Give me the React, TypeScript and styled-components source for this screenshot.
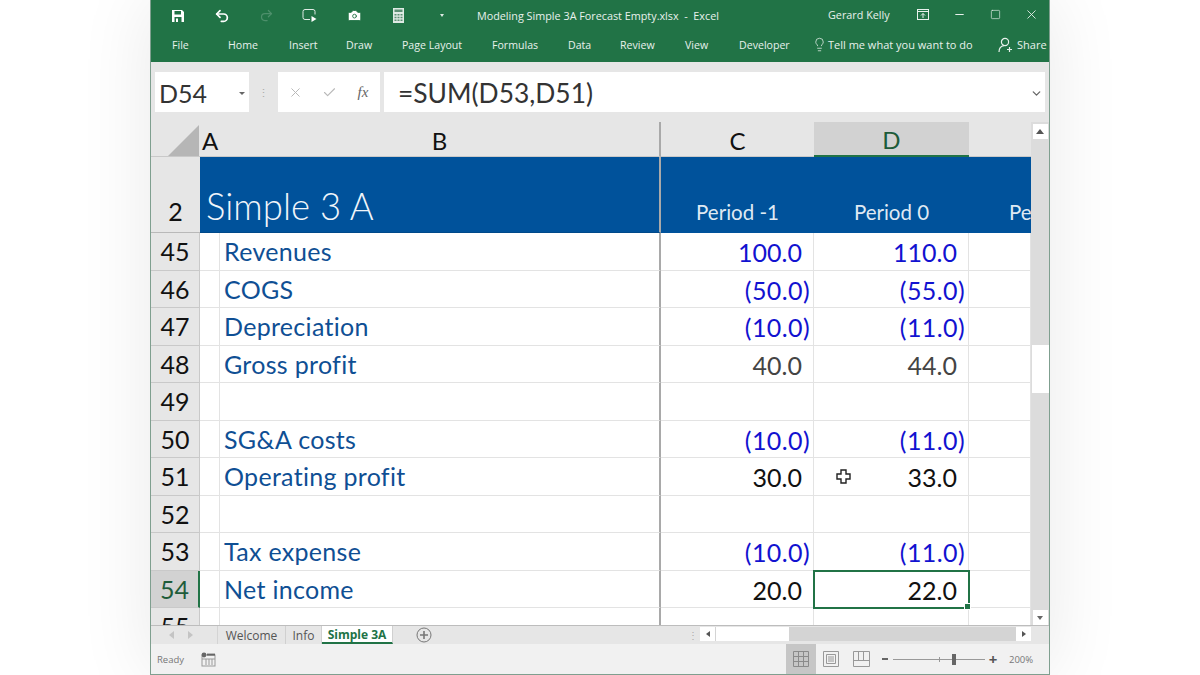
import React from "react"
import styled, { createGlobalStyle } from "styled-components"
import { Camera, Lightbulb, Redo2, Undo2, X, Check, ChevronDown, Minus, Square } from "lucide-react"

const GREEN = "#217346"
const UI_FONT = '"Open Sans", "Liberation Sans", sans-serif'
const CELL_FONT = 'Lato, "Liberation Sans", sans-serif'

const GlobalStyle = createGlobalStyle`
    html, body {
        margin: 0;
        padding: 0;
        background: #fff;
        overflow: hidden;
    }
`

const Page = styled.div`
    width: 1200px;
    height: 675px;
    display: flex;
    justify-content: center;
    overflow: hidden;
`

const ExcelWindow = styled.div`
    width: 900px;
    height: 675px;
    box-sizing: border-box;
    border-left: 1px solid #7f9f8f;
    border-right: 1px solid #7f9f8f;
    border-bottom: 1px solid #7f9f8f;
    display: flex;
    flex-direction: column;
    box-shadow: 0 0 70px rgba(0, 0, 0, 0.09);
    background: #e6e6e6;
    font-family: ${UI_FONT};
    position: relative;
`

const Ribbon = styled.div`
    height: 62px;
    background: ${GREEN};
    color: #e8f1ec;
    display: flex;
    flex-direction: column;
    flex-shrink: 0;
`

const TitleRow = styled.div`
    height: 31px;
    display: flex;
    align-items: center;
    padding-left: 5px;
    font-size: 10.8px;
`

const QuickButton = styled.div`
    width: 44px;
    height: 31px;
    display: flex;
    align-items: center;
    justify-content: center;
    flex-shrink: 0;
`

const QuickCaret = styled.span`
    width: 0;
    height: 0;
    border-left: 2px solid transparent;
    border-right: 2px solid transparent;
    border-top: 3px solid #dfeae4;
`

const FileName = styled.div`
    margin-left: 13px;
    width: 351px;
    flex-shrink: 0;
    white-space: pre;
`

const UserName = styled.div`
    width: 77px;
    flex-shrink: 0;
    margin-top: -3px;
    white-space: nowrap;
`

const WindowButton = styled.div`
    width: 36px;
    height: 30px;
    margin-top: -3px;
    display: flex;
    align-items: center;
    justify-content: center;
    flex-shrink: 0;
`

const TabRow = styled.div`
    height: 31px;
    box-sizing: border-box;
    padding: 0 0 4px 21px;
    display: flex;
    align-items: center;
    font-size: 10.6px;
`

const RibbonTab = styled.div<{ $width: number }>`
    width: ${props => props.$width}px;
    flex-shrink: 0;
    white-space: nowrap;
`

const TellMe = styled.div`
    width: 186px;
    flex-shrink: 0;
    display: flex;
    align-items: center;
    gap: 1px;
    margin-left: -2px;
    font-size: 11px;
    white-space: nowrap;
`

const ShareBox = styled.div`
    display: flex;
    align-items: center;
    gap: 3px;
    font-size: 11px;
`

const FormulaBar = styled.div`
    height: 60px;
    flex-shrink: 0;
    box-sizing: border-box;
    padding: 10px 4px 10px 4px;
    display: flex;
    align-items: stretch;
    background: #e6e6e6;
`

const NameBox = styled.div`
    width: 94px;
    background: #fff;
    display: flex;
    align-items: center;
    justify-content: space-between;
    box-sizing: border-box;
    padding: 2px 4px 0 4px;
    font-family: ${CELL_FONT};
    font-size: 25px;
    color: #333;
`

const Caret = styled.span`
    width: 0;
    height: 0;
    border-left: 3px solid transparent;
    border-right: 3px solid transparent;
    border-top: 3px solid #666;
`

const Grip = styled.div`
    width: 29px;
    display: flex;
    align-items: center;
    justify-content: center;
    color: #aaa;
    font-size: 11px;
`

const FxBox = styled.div`
    width: 102px;
    background: #fff;
    display: grid;
    grid-template-columns: repeat(3, 34px);
    align-items: center;
    justify-items: center;
    color: #b9b9b9;
`

const FxMark = styled.span`
    font-family: "Liberation Serif", serif;
    font-style: italic;
    font-size: 15px;
    color: #666;
`

const FormulaInput = styled.div`
    flex: 1;
    margin-left: 4px;
    background: #fff;
    display: flex;
    align-items: center;
    justify-content: space-between;
    padding: 2px 2px 0 14px;
    font-family: ${CELL_FONT};
    font-size: 26.4px;
    color: #333;
`

const SheetArea = styled.div`
    height: 503px;
    flex-shrink: 0;
    display: flex;
`

const Sheet = styled.div`
    width: 880px;
    flex-shrink: 0;
    overflow: hidden;
    background: #fff;
    font-family: ${CELL_FONT};
    position: relative;
`

const gridColumns = "49px 20px 441px 153px 155px 62px"

const HeaderRow = styled.div`
    height: 35px;
    display: grid;
    grid-template-columns: ${gridColumns};
    background: #e6e6e6;
    font-size: 24px;
    color: #111;
`

const ColumnHead = styled.div<{ $selected?: boolean; $frozen?: boolean }>`
    box-sizing: border-box;
    display: flex;
    align-items: center;
    justify-content: center;
    padding-top: 2px;
    background: ${props => (props.$selected ? "#d2d2d2" : "#e6e6e6")};
    color: ${props => (props.$selected ? "#1e5c3a" : "#111")};
    border-bottom: ${props => (props.$selected ? `2px solid ${GREEN}` : "1px solid #c9c9c9")};
    border-right: ${props => (props.$frozen ? "2px solid #a9a9a9" : "none")};
`

const CornerHead = styled.div`
    box-sizing: border-box;
    display: flex;
    align-items: flex-end;
    justify-content: flex-end;
    border-bottom: 1px solid #c9c9c9;
`

const BannerRow = styled.div`
    height: 76px;
    display: grid;
    grid-template-columns: ${gridColumns};
`

const BannerHead = styled.div`
    background: #e6e6e6;
    border-bottom: 1px solid #b9b9b9;
    box-sizing: border-box;
    display: flex;
    align-items: flex-end;
    justify-content: center;
    padding-bottom: 6px;
    font-size: 25px;
    color: #111;
`

const BannerTitle = styled.div`
    grid-column: span 2;
    background: #00529b;
    color: #f0f5fa;
    box-sizing: border-box;
    display: flex;
    align-items: flex-end;
    padding: 0 0 3px 6px;
    font-size: 36.5px;
    font-weight: 300;
    line-height: 46px;
    border-right: 2px solid #a9a9a9;
    border-bottom: 1px solid #00498a;
`

const BannerPeriod = styled.div`
    background: #00529b;
    color: #dfe9f3;
    display: flex;
    align-items: flex-end;
    justify-content: center;
    padding-bottom: 9px;
    font-size: 20.5px;
    overflow: hidden;
    white-space: nowrap;
`

const BannerEdge = styled(BannerPeriod)`
    justify-content: flex-start;
    padding-left: 40px;
`

const Row = styled.div`
    height: 37.5px;
    display: grid;
    grid-template-columns: ${gridColumns};
`

const RowHead = styled.div<{ $selected?: boolean }>`
    box-sizing: border-box;
    background: ${props => (props.$selected ? "#d2d2d2" : "#e6e6e6")};
    color: ${props => (props.$selected ? "#1e5c3a" : "#111")};
    border-bottom: 1px solid #c9c9c9;
    border-right: ${props => (props.$selected ? `2px solid ${GREEN}` : "1px solid #c9c9c9")};
    display: flex;
    align-items: center;
    justify-content: center;
    font-size: 25px;
`

const Cell = styled.div<{ $frozen?: boolean; $color?: string; $active?: boolean; $negative?: boolean }>`
    box-sizing: border-box;
    border-bottom: 1px solid #e3e3e3;
    border-right: ${props => (props.$frozen ? "2px solid #a9a9a9" : "1px solid #e3e3e3")};
    color: ${props => props.$color || "#111"};
    display: flex;
    align-items: center;
    justify-content: flex-end;
    padding: 2px ${props => (props.$negative ? 3 : 11)}px 0 0;
    font-size: 25px;
    letter-spacing: ${props => (props.$negative ? 0.4 : 0)}px;
    white-space: nowrap;
    position: relative;
    ${props => props.$active && `
        outline: 2px solid ${GREEN};
        outline-offset: -1px;
        z-index: 1;
    `}
`

const LabelCell = styled(Cell)`
    justify-content: flex-start;
    padding: 0 0 0 4px;
    color: #0f4f94;
    letter-spacing: 0.3px;
`

const FillHandle = styled.span`
    position: absolute;
    right: -3px;
    bottom: -3px;
    width: 5px;
    height: 5px;
    background: ${GREEN};
    border: 1px solid #fff;
`

const CursorMark = styled.svg`
    position: absolute;
    left: 685px;
    top: 347px;
    z-index: 2;
`

const VerticalScroll = styled.div`
    width: 19px;
    background: #dcdcdc;
    display: flex;
    flex-direction: column;
    align-items: center;
    box-sizing: border-box;
    padding-top: 2px;
`

const ScrollButton = styled.div<{ $mt?: number }>`
    width: 15px;
    height: 15px;
    flex-shrink: 0;
    background: #fff;
    margin-top: ${props => props.$mt || 0}px;
    display: flex;
    align-items: center;
    justify-content: center;
`

const VerticalThumb = styled.div`
    width: 17px;
    height: 48px;
    flex-shrink: 0;
    background: #fff;
    margin-top: 206px;
`

const ArrowUp = styled.span`
    border-left: 4px solid transparent;
    border-right: 4px solid transparent;
    border-bottom: 5px solid #555;
`

const ArrowDown = styled.span`
    border-left: 3px solid transparent;
    border-right: 3px solid transparent;
    border-top: 4px solid #666;
`

const ArrowLeft = styled.span`
    border-top: 3px solid transparent;
    border-bottom: 3px solid transparent;
    border-right: 4px solid #555;
`

const ArrowRight = styled.span`
    border-top: 3px solid transparent;
    border-bottom: 3px solid transparent;
    border-left: 4px solid #555;
`

const SheetTabsBar = styled.div`
    height: 19px;
    flex-shrink: 0;
    box-sizing: border-box;
    border-top: 1px solid #bdbdbd;
    display: flex;
    align-items: stretch;
    background: #e6e6e6;
    font-size: 12px;
    color: #555;
`

const TabNav = styled.div`
    width: 67px;
    flex-shrink: 0;
    display: flex;
    align-items: center;
    justify-content: center;
    gap: 14px;
    padding-right: 6px;
    box-sizing: border-box;
    border-right: 1px solid #d4d4d4;
`

const SheetTab = styled.div<{ $active?: boolean; $width: number }>`
    width: ${props => props.$width}px;
    flex-shrink: 0;
    box-sizing: border-box;
    display: flex;
    align-items: center;
    justify-content: center;
    background: ${props => (props.$active ? "#fff" : "#e6e6e6")};
    color: ${props => (props.$active ? "#217346" : "#555")};
    font-weight: ${props => (props.$active ? 700 : 400)};
    border-right: 1px solid #d0d0d0;
    border-bottom: ${props => (props.$active ? `2px solid ${GREEN}` : "none")};
`

const AddSheet = styled.div`
    width: 295px;
    flex-shrink: 0;
    display: flex;
    align-items: center;
    padding-left: 23px;
    box-sizing: border-box;
`

const TabGrip = styled.div`
    width: 12px;
    flex-shrink: 0;
    color: #aaa;
    display: flex;
    align-items: center;
    justify-content: flex-start;
    font-size: 10px;
`

const HorizontalScroll = styled.div`
    width: 331px;
    flex-shrink: 0;
    display: flex;
    align-items: center;
    background: #d4d4d4;
    margin: 1px 0 3px 0;
`

const HScrollButton = styled.div`
    width: 15px;
    height: 100%;
    background: #fff;
    flex-shrink: 0;
    display: flex;
    align-items: center;
    justify-content: center;
`

const HorizontalThumb = styled.div`
    width: 73px;
    height: 100%;
    background: #fff;
    margin-left: 1px;
`

const HorizontalGap = styled.div`
    flex: 1;
`

const StatusBar = styled.div`
    flex: 1;
    background: #f1f1f1;
    display: flex;
    align-items: center;
    font-size: 9.5px;
    color: #777;
    padding-left: 6px;
`

const ReadyLabel = styled.div`
    width: 44px;
    flex-shrink: 0;
`

const StatusSpacer = styled.div`
    width: 570px;
    flex-shrink: 0;
`

const ViewButton = styled.div<{ $active?: boolean }>`
    width: 30px;
    height: 30px;
    flex-shrink: 0;
    display: flex;
    align-items: center;
    justify-content: center;
    background: ${props => (props.$active ? "#c6c6c6" : "transparent")};
`

const ZoomMinus = styled.div`
    width: 6px;
    margin-left: 6px;
    height: 2px;
    background: #666;
    flex-shrink: 0;
`

const ZoomTrack = styled.div`
    width: 92px;
    height: 1px;
    margin: 0 1px 0 5px;
    background: #999;
    position: relative;
    flex-shrink: 0;
`

const ZoomTick = styled.span`
    position: absolute;
    left: 46px;
    top: -2px;
    width: 1px;
    height: 5px;
    background: #999;
`

const ZoomThumb = styled.span`
    position: absolute;
    left: 59px;
    top: -5px;
    width: 4px;
    height: 11px;
    background: #666;
`

const ZoomPlus = styled.div`
    color: #555;
    font-size: 15px;
    font-weight: 700;
    width: 14px;
    text-align: center;
    flex-shrink: 0;
`

const ZoomValue = styled.div`
    margin-left: 9px;
    flex-shrink: 0;
`

type RowData = {
    num: number,
    label?: string,
    c?: string,
    d?: string,
    tone?: "input" | "calc" | "total"
}

const rows: RowData[] = [
    { num: 45, label: "Revenues", c: "100.0", d: "110.0", tone: "input" },
    { num: 46, label: "COGS", c: "(50.0)", d: "(55.0)", tone: "input" },
    { num: 47, label: "Depreciation", c: "(10.0)", d: "(11.0)", tone: "input" },
    { num: 48, label: "Gross profit", c: "40.0", d: "44.0", tone: "calc" },
    { num: 49 },
    { num: 50, label: "SG&A costs", c: "(10.0)", d: "(11.0)", tone: "input" },
    { num: 51, label: "Operating profit", c: "30.0", d: "33.0", tone: "total" },
    { num: 52 },
    { num: 53, label: "Tax expense", c: "(10.0)", d: "(11.0)", tone: "input" },
    { num: 54, label: "Net income", c: "20.0", d: "22.0", tone: "total" },
    { num: 55 },
]

const toneColors = { input: "#1212d0", calc: "#444", total: "#111" }

const tabs: [string, number][] = [
    ["File", 56], ["Home", 61], ["Insert", 57], ["Draw", 56], ["Page Layout", 90],
    ["Formulas", 76], ["Data", 52], ["Review", 65], ["View", 54], ["Developer", 75],
]

function SaveIcon() {
    return (
        <svg width="14" height="14" viewBox="0 0 14 14" fill="none">
            <path d="M1 1h10l2 2v10H1z" fill="#fff" />
            <rect x="3.5" y="2" width="6.5" height="3.5" fill={GREEN} />
            <rect x="3.5" y="8" width="7" height="5" fill={GREEN} />
            <rect x="5" y="9.5" width="2" height="3.5" fill="#fff" />
        </svg>
    )
}

function SlideIcon() {
    return (
        <svg width="16" height="14" viewBox="0 0 16 14" fill="none" stroke="#dfeae4" strokeWidth="1">
            <path d="M8 10.5H3a2 2 0 0 1-2-2v-6a2 2 0 0 1 2-2h8a2 2 0 0 1 2 2v3" />
            <path d="M9.5 7v6l5-3z" fill="#fff" stroke="none" />
        </svg>
    )
}

function CalculatorIcon() {
    return (
        <svg width="11" height="15" viewBox="0 0 11 15">
            <rect x="0" y="0" width="11" height="15" fill="#dfeae4" />
            <rect x="1.5" y="1.5" width="8" height="2.5" fill="#5c8f74" />
            <path d="M1.5 6h2v1.5h-2zM4.5 6h2v1.5h-2zM7.5 6h2v1.5h-2zM1.5 8.7h2v1.5h-2zM4.5 8.7h2v1.5h-2zM7.5 8.7h2v1.5h-2zM1.5 11.4h2v1.5h-2zM4.5 11.4h2v1.5h-2zM7.5 11.4h2v1.5h-2z" fill="#5c8f74" />
        </svg>
    )
}

function RestoreRibbonIcon() {
    return (
        <svg width="12" height="11" viewBox="0 0 12 11" fill="none" stroke="#e8f1ec" strokeWidth="1">
            <rect x="0.5" y="0.5" width="11" height="10" />
            <path d="M0.5 2.5h11" />
            <path d="M6 9V4.5M4 6.5l2-2 2 2" />
        </svg>
    )
}

function ShareIcon() {
    return (
        <svg width="16" height="16" viewBox="0 0 16 16" fill="none" stroke="#e8f1ec" strokeWidth="1.2">
            <circle cx="7" cy="5" r="3.6" />
            <path d="M1 15c0-3.6 2.2-6 5-6.4M11.5 10v5M9 12.5h5" />
        </svg>
    )
}

function CursorIcon() {
    return (
        <CursorMark width="15" height="15" viewBox="0 0 15 15">
            <path d="M5 1h5v4h4v5h-4v4H5v-4H1V5h4z" fill="#fff" stroke="#222" strokeWidth="1.4" />
        </CursorMark>
    )
}

function PlusCircle() {
    return (
        <svg width="16" height="16" viewBox="0 0 16 16" fill="none" stroke="#777" strokeWidth="1">
            <circle cx="8" cy="8" r="7" />
            <path d="M8 4v8M4 8h8" strokeWidth="1.6" />
        </svg>
    )
}

function MacroIcon() {
    return (
        <svg width="15" height="15" viewBox="0 0 15 15" fill="none" stroke="#999" strokeWidth="1">
            <rect x="1" y="3" width="13" height="11" />
            <path d="M5 7v6M8 7v6M11 7v6M1 7h13" />
            <circle cx="3" cy="3" r="2.4" fill="#666" stroke="none" />
            <rect x="6" y="1.6" width="8" height="2" fill="#666" stroke="none" />
        </svg>
    )
}

function NormalViewIcon() {
    return (
        <svg width="16" height="16" viewBox="0 0 16 16" fill="none" stroke="#8a8a8a" strokeWidth="1">
            <path d="M.5.5h15v15H.5zM5.5.5v15M10.5.5v15M.5 5.5h15M.5 10.5h15" />
        </svg>
    )
}

function LayoutViewIcon() {
    return (
        <svg width="16" height="16" viewBox="0 0 16 16" fill="none" stroke="#999" strokeWidth="1">
            <path d="M.5.5h15v15H.5zM3.5 3.5h9v9h-9zM5 6h6M5 8h6M5 10h6" />
        </svg>
    )
}

function BreakViewIcon() {
    return (
        <svg width="17" height="16" viewBox="0 0 17 16" fill="none" stroke="#999" strokeWidth="1">
            <path d="M.5.5h16v15H.5zM.5 9.5h16" />
            <path d="M5.5.5v9M10.5.5v9" />
        </svg>
    )
}

function ArrowLeftSmall() {
    return <svg width="5" height="8" viewBox="0 0 5 8"><path d="M5 0v8L0 4z" fill="#c4c4c4" /></svg>
}

function ArrowRightSmall() {
    return <svg width="5" height="8" viewBox="0 0 5 8"><path d="M0 0v8l5-4z" fill="#c4c4c4" /></svg>
}

export default function App() {
    return (
        <Page>
            <GlobalStyle />
            <ExcelWindow>
                <Ribbon>
                    <TitleRow>
                        <QuickButton><SaveIcon /></QuickButton>
                        <QuickButton><Undo2 size={16} color="#fff" strokeWidth={2.6} /></QuickButton>
                        <QuickButton><Redo2 size={15} color="#4d8f6b" strokeWidth={2} /></QuickButton>
                        <QuickButton><SlideIcon /></QuickButton>
                        <QuickButton><Camera size={15} color={GREEN} fill="#fff" strokeWidth={1.4} /></QuickButton>
                        <QuickButton><CalculatorIcon /></QuickButton>
                        <QuickButton><QuickCaret /></QuickButton>
                        <FileName>Modeling Simple 3A Forecast Empty.xlsx  -  Excel</FileName>
                        <UserName>Gerard Kelly</UserName>
                        <WindowButton><RestoreRibbonIcon /></WindowButton>
                        <WindowButton><Minus size={13} color="#e8f1ec" /></WindowButton>
                        <WindowButton><Square size={11} color="#e8f1ec" strokeWidth={1.4} /></WindowButton>
                        <WindowButton><X size={15} color="#e8f1ec" strokeWidth={1.4} /></WindowButton>
                    </TitleRow>
                    <TabRow>
                        {tabs.map(([name, width]) => (
                            <RibbonTab key={name} $width={width}>{name}</RibbonTab>
                        ))}
                        <TellMe>
                            <Lightbulb size={15} strokeWidth={1.2} />
                            Tell me what you want to do
                        </TellMe>
                        <ShareBox>
                            <ShareIcon />
                            Share
                        </ShareBox>
                    </TabRow>
                </Ribbon>

                <FormulaBar>
                    <NameBox>D54<Caret /></NameBox>
                    <Grip>⋮</Grip>
                    <FxBox>
                        <X size={15} strokeWidth={1.6} />
                        <Check size={15} strokeWidth={1.8} />
                        <FxMark>fx</FxMark>
                    </FxBox>
                    <FormulaInput>
                        =SUM(D53,D51)
                        <ChevronDown size={13} color="#666" strokeWidth={2.4} />
                    </FormulaInput>
                </FormulaBar>

                <SheetArea>
                    <Sheet>
                        <HeaderRow>
                            <CornerHead>
                                <svg width="32" height="31" viewBox="0 0 32 31">
                                    <path d="M0 31L31 0v31z" fill="#b6b6b6" />
                                </svg>
                            </CornerHead>
                            <ColumnHead>A</ColumnHead>
                            <ColumnHead $frozen>B</ColumnHead>
                            <ColumnHead>C</ColumnHead>
                            <ColumnHead $selected>D</ColumnHead>
                            <ColumnHead />
                        </HeaderRow>
                        <BannerRow>
                            <BannerHead>2</BannerHead>
                            <BannerTitle>Simple 3 A</BannerTitle>
                            <BannerPeriod>Period -1</BannerPeriod>
                            <BannerPeriod>Period 0</BannerPeriod>
                            <BannerEdge>Period 1</BannerEdge>
                        </BannerRow>
                        {rows.map(row => {
                            const color = row.tone && toneColors[row.tone]
                            const active = row.num === 54
                            return (
                                <Row key={row.num}>
                                    <RowHead $selected={active}>{row.num}</RowHead>
                                    <Cell />
                                    <LabelCell $frozen>{row.label}</LabelCell>
                                    <Cell $color={color} $negative={row.c?.startsWith("(")}>{row.c}</Cell>
                                    <Cell $color={color} $active={active} $negative={row.d?.startsWith("(")}>
                                        {row.d}
                                        {active && <FillHandle />}
                                    </Cell>
                                    <Cell />
                                </Row>
                            )
                        })}
                        <CursorIcon />
                    </Sheet>
                    <VerticalScroll>
                        <ScrollButton><ArrowUp /></ScrollButton>
                        <VerticalThumb />
                        <ScrollButton $mt={217}><ArrowDown /></ScrollButton>
                    </VerticalScroll>
                </SheetArea>

                <SheetTabsBar>
                    <TabNav><ArrowLeftSmall /><ArrowRightSmall /></TabNav>
                    <SheetTab $width={68}>Welcome</SheetTab>
                    <SheetTab $width={36}>Info</SheetTab>
                    <SheetTab $width={71} $active>Simple 3A</SheetTab>
                    <AddSheet><PlusCircle /></AddSheet>
                    <TabGrip>⋮</TabGrip>
                    <HorizontalScroll>
                        <HScrollButton><ArrowLeft /></HScrollButton>
                        <HorizontalThumb />
                        <HorizontalGap />
                        <HScrollButton><ArrowRight /></HScrollButton>
                    </HorizontalScroll>
                </SheetTabsBar>

                <StatusBar>
                    <ReadyLabel>Ready</ReadyLabel>
                    <MacroIcon />
                    <StatusSpacer />
                    <ViewButton $active><NormalViewIcon /></ViewButton>
                    <ViewButton><LayoutViewIcon /></ViewButton>
                    <ViewButton><BreakViewIcon /></ViewButton>
                    <ZoomMinus />
                    <ZoomTrack><ZoomTick /><ZoomThumb /></ZoomTrack>
                    <ZoomPlus>+</ZoomPlus>
                    <ZoomValue>200%</ZoomValue>
                </StatusBar>
            </ExcelWindow>
        </Page>
    )
}
